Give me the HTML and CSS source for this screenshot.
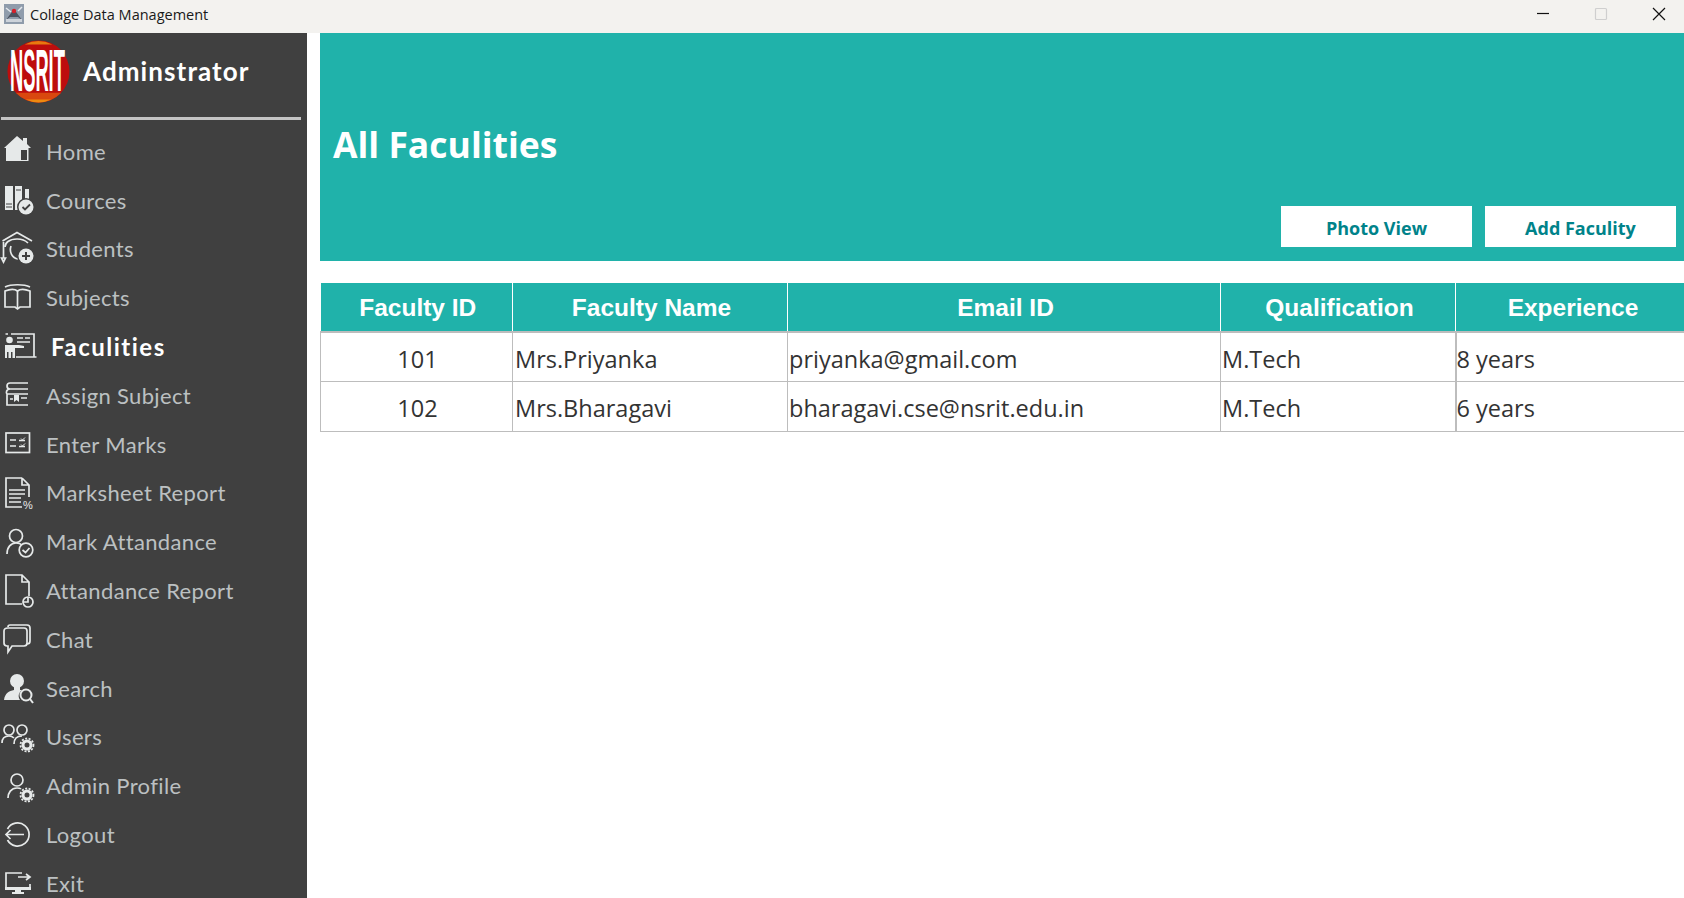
FILE: index.html
```html
<!DOCTYPE html>
<html>
<head>
  <title>Collage Data Management</title>
  <link rel="stylesheet" href="styles.css">
</head>
<body>
  <div class="titlebar">
    <div class="title-left">
      <svg class="app-icon" viewBox="0 0 20 20">
        <rect width="20" height="20" fill="#8f9cab"/>
        <path d="M2 16 L10 5 L18 16 L14 13 H6Z" fill="#4b5360"/>
        <path d="M2 4 L7 8 M18 3 L14 7" stroke="#e3e7ec" stroke-width="1.500"/>
        <rect x="2" y="15" width="16" height="3" fill="#cdd3da"/>
        <circle cx="10" cy="7" r="2.200" fill="#d5202a"/>
      </svg>
      <span>Collage Data Management</span>
    </div>
    <div class="win-btns">
      <svg viewBox="0 0 16 16"><path d="M2 7.500H14" stroke="#111" stroke-width="1.200"/></svg>
      <svg viewBox="0 0 16 16"><rect x="2.500" y="2.500" width="11" height="11" rx="1" fill="none" stroke="#cfcfcf" stroke-width="1.200"/></svg>
      <svg viewBox="0 0 16 16"><path d="M2 2L14 14M14 2L2 14" stroke="#111" stroke-width="1.200"/></svg>
    </div>
  </div>

  <div class="app">
    <aside class="sidebar">
      <div class="brand">
        <svg class="logo" viewBox="0 0 64 64">
          <circle cx="32" cy="32" r="31.500" fill="#bd0d0d"/>
          <path d="M18 4.500A31.500 31.500 0 0 1 46 4.500Z" fill="#e8790f"/>
          <path d="M9 53.500H55A31.500 31.500 0 0 1 9 53.500Z" fill="#d9480f"/>
          <path d="M19 60.500H45A31.500 31.500 0 0 1 19 60.500Z" fill="#ee8a10"/>
          <text class="logo-text" transform="translate(3 52) scale(0.31 1)">NSRIT</text>
        </svg>
        <span class="brand-name">Adminstrator</span>
      </div>
      <hr class="brand-line">

      <nav class="menu">
        <a class="menu-item">
          <svg class="ico" viewBox="0 0 40 40">
            <path class="solid" d="M4 17L17 5L23 10V7H27V13L31 17H28.500V30H6V17Z"/>
            <rect x="21" y="19" width="6" height="10" fill="#404040"/>
          </svg>
          <span>Home</span>
        </a>
        <a class="menu-item">
          <svg class="ico" viewBox="0 0 40 40">
            <rect class="solid" x="5" y="6" width="8" height="24"/>
            <rect class="solid" x="15" y="6" width="7" height="24"/>
            <rect class="solid" x="25" y="9" width="4" height="12"/>
            <path d="M6 24H12M6 27H12M16 10H21" stroke="#404040" stroke-width="1"/>
            <circle cx="26" cy="27" r="9" fill="#404040"/>
            <circle class="solid" cx="26" cy="27" r="7.500"/>
            <path d="M22.500 27L25 29.500L30 24.500" fill="none" stroke="#404040" stroke-width="1.800"/>
          </svg>
          <span>Cources</span>
        </a>
        <a class="menu-item">
          <svg class="ico" viewBox="0 0 40 40">
            <path class="line" d="M2.500 12L17 3.500L32 12"/>
            <path class="line" d="M5 18C5 14 9 10 17 10C21 10 25 11 28 14"/>
            <path class="line" d="M3.500 13V29M1.500 29H5.500L3.500 33Z"/>
            <path class="line" d="M11 17C9 23 12 29 18 30"/>
            <circle cx="26" cy="27" r="9" fill="#404040"/>
            <circle class="solid" cx="26" cy="27" r="7.500"/>
            <path d="M26 23V31M22 27H30" stroke="#404040" stroke-width="2"/>
          </svg>
          <span>Students</span>
        </a>
        <a class="menu-item">
          <svg class="ico" viewBox="0 0 40 40">
            <path class="line" d="M5 9C11 6 24 6 30 9"/>
            <path class="line" d="M5 13C10 11 15 11 17.500 13C20 11 25 11 30 13V29H20L17.500 31L15 29H5Z"/>
            <path class="line" d="M17.500 13V30"/>
          </svg>
          <span>Subjects</span>
        </a>
        <a class="menu-item active">
          <svg class="ico" viewBox="0 0 40 40">
            <path class="line" d="M11 7H34V30"/>
            <path class="line" d="M5.500 7H8M16 30H36.500"/>
            <circle class="solid" cx="9.500" cy="13" r="3.300"/>
            <path class="solid" d="M5 18H19L24 19V21L15 21V31H12.500V25H11V31H8.500V25H7V31H5Z"/>
            <path d="M17 11H23M25 11H30M17 15H30" stroke="#e6e9e9" stroke-width="1.500"/>
          </svg>
          <span>Faculities</span>
        </a>
        <a class="menu-item">
          <svg class="ico" viewBox="0 0 40 40">
            <path class="line" d="M28 8H10C6 8 6 14 10 14H28M28 14H10C6 14 6 18 7 19M7 19V30H28M7 19H28"/>
            <path class="solid" d="M14 20H19V27L16.500 25L14 27Z"/>
            <path d="M21 23H27M10 24H13" stroke="#e6e9e9" stroke-width="1.500"/>
          </svg>
          <span>Assign Subject</span>
        </a>
        <a class="menu-item">
          <svg class="ico" viewBox="0 0 40 40">
            <rect class="line" x="6" y="9" width="23.500" height="19.500"/>
            <path d="M10 16H16M10 22H16M19 16.500H25M19 22.500H25" stroke="#e6e9e9" stroke-width="1.600"/>
            <path d="M21 14.500L22.500 16L25 13.500M21 20.500L22.500 22L25 19.500" fill="none" stroke="#e6e9e9" stroke-width="1"/>
          </svg>
          <span>Enter Marks</span>
        </a>
        <a class="menu-item">
          <svg class="ico" viewBox="0 0 40 40">
            <path class="line" d="M22 5H6V34H22M22 5L29 12V24M22 5V12H29"/>
            <path d="M9 17H25M9 21H25M9 25H21M9 29H21" stroke="#e6e9e9" stroke-width="1.600"/>
            <text class="pct" x="23" y="36">%</text>
          </svg>
          <span>Marksheet Report</span>
        </a>
        <a class="menu-item">
          <svg class="ico" viewBox="0 0 40 40">
            <circle class="line" cx="16" cy="14" r="6.500"/>
            <path class="line" d="M7 32C7 25 11 21 16 21C19 21 21 22 22 23"/>
            <circle class="line" cx="26" cy="28" r="6.800"/>
            <path class="line" d="M22.500 28L25.500 30.500L29.500 26"/>
          </svg>
          <span>Mark Attandance</span>
        </a>
        <a class="menu-item">
          <svg class="ico" viewBox="0 0 40 40">
            <path class="line" d="M22 33H6V4H22L29 11V25M22 4V11H29"/>
            <circle class="line" cx="28" cy="31" r="5"/>
            <path class="line" d="M28 26V31H23"/>
          </svg>
          <span>Attandance Report</span>
        </a>
        <a class="menu-item">
          <svg class="ico" viewBox="0 0 40 40">
            <path class="line" d="M8 8C8 6.500 9 6 10 6H27C29 6 30 7 30 9V22C30 24 29 25 27 25"/>
            <path class="line" d="M8 9H24C26 9 27 10 27 12V24C27 26 26 27 24 27H12L8 33V27H7C5 27 4 26 4 24V12C4 10 5 9 8 9Z"/>
          </svg>
          <span>Chat</span>
        </a>
        <a class="menu-item">
          <svg class="ico" viewBox="0 0 40 40">
            <circle class="solid" cx="17" cy="13" r="7"/>
            <path class="solid" d="M4 32C5 25 9 23 14 22V19H20V22H22C18 25 18 29 20 32Z"/>
            <circle class="line thick" cx="26" cy="27" r="5.500"/>
            <path class="line thick" d="M30 31L33 35"/>
          </svg>
          <span>Search</span>
        </a>
        <a class="menu-item">
          <svg class="ico" viewBox="0 0 40 40">
            <circle class="line" cx="9" cy="13" r="5"/>
            <circle class="line" cx="22" cy="13" r="5"/>
            <path class="line" d="M2 26C2 21 5 19 9 19C11 19 13 20 14 21"/>
            <path class="line" d="M14 27C14 22 17 19 22 19"/>
            <circle cx="27" cy="28" r="4" fill="none" stroke="#e6e9e9" stroke-width="3"/>
            <circle cx="27" cy="28" r="6.500" fill="none" stroke="#e6e9e9" stroke-width="1.800" stroke-dasharray="2 1.500"/>
          </svg>
          <span>Users</span>
        </a>
        <a class="menu-item">
          <svg class="ico" viewBox="0 0 40 40">
            <circle class="line" cx="17" cy="14" r="6"/>
            <path class="line" d="M8 32C8 27 11 22 17 22C18 22 20 22 21 23"/>
            <circle cx="27" cy="29" r="4" fill="none" stroke="#e6e9e9" stroke-width="3"/>
            <circle cx="27" cy="29" r="6.500" fill="none" stroke="#e6e9e9" stroke-width="1.800" stroke-dasharray="2 1.500"/>
          </svg>
          <span>Admin Profile</span>
        </a>
        <a class="menu-item">
          <svg class="ico" viewBox="0 0 40 40">
            <path class="line" d="M7.500 14A11.500 11.500 0 1 1 7.500 25"/>
            <path class="line" d="M24 19.500H6.500M10.500 15L6 19.500L10.500 24"/>
          </svg>
          <span>Logout</span>
        </a>
        <a class="menu-item">
          <svg class="ico" viewBox="0 0 40 40">
            <path class="line" d="M22 10H6V25H30V21"/>
            <path class="solid" d="M5 24H31V27H5Z"/>
            <path class="solid" d="M15 27H21V29H24V31H12V29H15Z"/>
            <path class="line" d="M18 14H29M26 11L30 14L26 17"/>
          </svg>
          <span>Exit</span>
        </a>
      </nav>
    </aside>

    <main class="content">
      <header class="page-head">
        <h1>All Faculities</h1>
        <div class="head-actions">
          <button class="head-btn">Photo View</button>
          <button class="head-btn">Add Faculity</button>
        </div>
      </header>

      <table class="grid">
        <colgroup>
          <col class="col-id">
          <col class="col-name">
          <col class="col-mail">
          <col class="col-qual">
          <col class="col-exp">
        </colgroup>
        <thead>
          <tr>
            <th>Faculty ID</th>
            <th>Faculty Name</th>
            <th>Email ID</th>
            <th>Qualification</th>
            <th>Experience</th>
          </tr>
        </thead>
        <tbody>
          <tr>
            <td class="center">101</td>
            <td>Mrs.Priyanka</td>
            <td class="tight">priyanka@gmail.com</td>
            <td class="tight">M.Tech</td>
            <td class="exp">8 years</td>
          </tr>
          <tr>
            <td class="center">102</td>
            <td>Mrs.Bharagavi</td>
            <td class="tight">bharagavi.cse@nsrit.edu.in</td>
            <td class="tight">M.Tech</td>
            <td class="exp">6 years</td>
          </tr>
        </tbody>
      </table>
    </main>
  </div>
</body>
</html>
```

FILE: styles.css
```css
:root {
  --teal: #20b2aa;
  --side-bg: #404040;
  --icon-color: #e6e9e9;
  --grid-line: #bdbdbd;
}

* {
  box-sizing: border-box;
}

html, body {
  height: 100%;
}

body {
  margin: 0;
  overflow: hidden;
  background: #fff;
  display: flex;
  flex-direction: column;
  font-family: "Open Sans", "Noto Sans", sans-serif;
}

/* window title bar */
.titlebar {
  height: 33px;
  flex: none;
  background: #f3f2ef;
  display: flex;
  justify-content: space-between;
  align-items: center;
}

.title-left {
  display: flex;
  align-items: center;
  gap: 6px;
  padding-left: 4px;
  padding-bottom: 5px;
  font-size: 14.500px;
  color: #1a1a1a;
}

.app-icon {
  width: 20px;
  height: 20px;
}

.win-btns {
  display: flex;
  gap: 42px;
  padding-right: 17px;
  padding-bottom: 5px;
}

.win-btns svg {
  width: 16px;
  height: 16px;
}

.app {
  flex: 1;
  min-height: 0;
  display: flex;
}

/* sidebar */
.sidebar {
  width: 307px;
  flex: none;
  background: var(--side-bg);
  overflow: hidden;
}

.brand {
  height: 84px;
  display: flex;
  align-items: center;
  gap: 13px;
  padding-left: 7px;
  padding-bottom: 7px;
}

.logo {
  width: 63px;
  height: 63px;
  flex: none;
  overflow: visible;
}

.logo-text {
  font-family: "Liberation Sans", sans-serif;
  font-weight: bold;
  font-size: 60px;
  fill: #fff;
}

.brand-name {
  font-family: Lato, sans-serif;
  font-weight: 700;
  font-size: 26px;
  letter-spacing: 1.100px;
  color: #fff;
  padding-bottom: 2px;
}

.brand-line {
  margin: 0 0 0 1px;
  width: 300px;
  height: 3px;
  border: none;
  background: #c4c4c4;
}

.menu {
  display: grid;
  grid-auto-rows: 48.800px;
  padding-top: 7px;
}

.menu-item {
  display: flex;
  align-items: center;
  gap: 6px;
  font-family: Lato, sans-serif;
  font-size: 22px;
  letter-spacing: 0.350px;
  color: #bcc0c2;
}

.menu-item.active {
  gap: 11px;
  font-weight: 700;
  font-size: 24px;
  letter-spacing: 1.500px;
  color: #fff;
}

.ico {
  width: 40px;
  height: 40px;
  flex: none;
}

.solid {
  fill: var(--icon-color);
}

.line {
  fill: none;
  stroke: var(--icon-color);
  stroke-width: 1.700;
}

.thick {
  stroke-width: 2;
}

.pct {
  font-family: "Liberation Sans", sans-serif;
  font-size: 11px;
  fill: var(--icon-color);
}

/* main area */
.content {
  flex: 1;
  min-width: 0;
}

.page-head {
  height: 228px;
  margin-left: 13px;
  background: var(--teal);
  padding: 91px 8px 0 13px;
}

.page-head h1 {
  margin: 0;
  height: 40px;
  line-height: 40px;
  font-size: 35.500px;
  font-weight: 700;
  color: #fff;
}

.head-actions {
  display: flex;
  justify-content: flex-end;
  gap: 13px;
  margin-top: 42px;
}

.head-btn {
  width: 191px;
  height: 41px;
  padding: 2px 0 0;
  border: none;
  background: #fff;
  color: #00838a;
  font-family: "Open Sans", sans-serif;
  font-size: 18px;
  font-weight: 700;
}

/* faculty table */
.grid {
  margin: 22px 0 0 13px;
  width: 1364px;
  table-layout: fixed;
  border-collapse: collapse;
}

.col-id { width: 192px; }
.col-name { width: 275px; }
.col-mail { width: 433px; }
.col-qual { width: 235px; }
.col-exp { width: 229px; }

.grid th {
  height: 49px;
  padding: 1px 0 0 3px;
  background: var(--teal);
  color: #fff;
  font-family: "Liberation Sans", sans-serif;
  font-size: 24.500px;
  font-weight: 700;
  border-left: 1px solid #fff;
  border-right: 1px solid #fff;
  border-bottom: 2px solid var(--grid-line);
}

.grid th:last-child {
  padding-left: 6px;
}

.grid th:first-child {
  border-left: none;
}

.grid td {
  height: 49.500px;
  padding: 4px 0 0 2px;
  font-size: 23.500px;
  color: #333;
  border: 1px solid var(--grid-line);
}

.grid td.center {
  text-align: center;
  padding-right: 0;
}

.grid td.tight {
  padding-left: 1px;
}

.grid td.exp {
  border-left-width: 2px;
  border-right: none;
  padding-left: 0;
}
```
